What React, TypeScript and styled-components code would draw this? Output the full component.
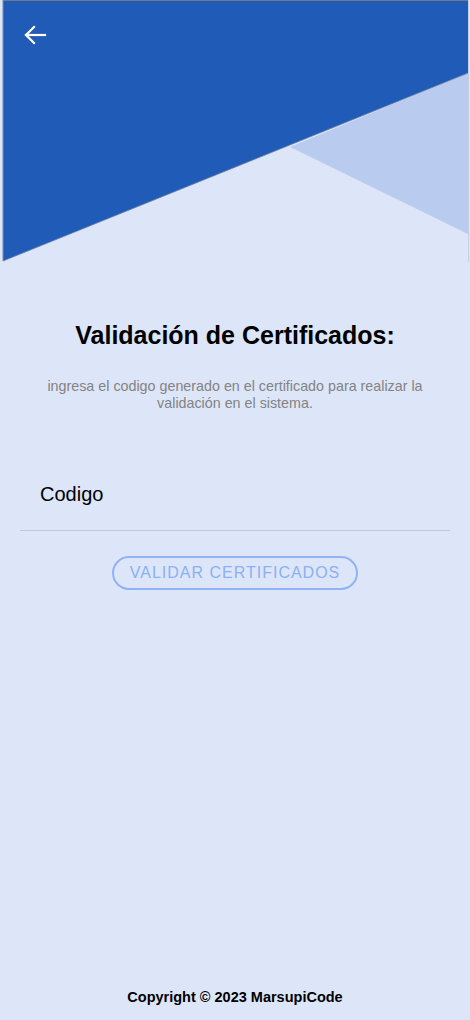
import React from "react";
import styled, { createGlobalStyle } from "styled-components";

const Global = createGlobalStyle`
  html, body { margin: 0; padding: 0; background: #dde6f8; }
  * { box-sizing: border-box; }
`;

const Page = styled.div`
  width: 470px;
  min-height: 1020px;
  display: flex;
  flex-direction: column;
  align-items: stretch;
  font-family: "Liberation Sans", Arial, sans-serif;
  background: #dde6f8;
`;

const Header = styled.header`
  position: relative;
  height: 262px;
`;

const BackButton = styled.button`
  position: absolute;
  left: 20px;
  top: 20px;
  width: 30px;
  height: 30px;
  padding: 0;
  border: 0;
  background: transparent;
  display: flex;
  align-items: center;
  justify-content: center;
  cursor: pointer;
`;

const Content = styled.main`
  flex: 1;
  display: flex;
  flex-direction: column;
  align-items: center;
  padding: 58px 20px 0;
`;

const Title = styled.h1`
  margin: 0;
  font-size: 25px;
  line-height: 30px;
  font-weight: 700;
  color: #000;
  text-align: center;
`;

const Subtitle = styled.p`
  margin: 28px 0 0;
  font-size: 14.3px;
  line-height: 17px;
  color: #838383;
  text-align: center;
  padding: 0 10px;
`;

const Field = styled.div`
  margin-top: 70px;
  width: 100%;
  border-bottom: 1px solid #c3c9d8;
  padding: 0 20px 24px;
`;

const Input = styled.input`
  width: 100%;
  border: 0;
  background: transparent;
  outline: none;
  font-family: "Liberation Sans", Arial, sans-serif;
  font-size: 20px;
  line-height: 24px;
  color: #000;
  padding: 0;
  &::placeholder { color: #000; opacity: 1; }
`;

const ValidateButton = styled.button`
  margin-top: 25px;
  height: 34px;
  padding: 0 16px;
  border: 2px solid #8fb3f6;
  border-radius: 17px;
  background: transparent;
  color: #8ab0f5;
  font-family: "Liberation Sans", Arial, sans-serif;
  font-size: 16px;
  letter-spacing: 1px;
  display: flex;
  align-items: center;
  justify-content: center;
`;

const Footer = styled.footer`
  padding: 0 0 14px;
  text-align: center;
  font-size: 14.5px;
  font-weight: 700;
  line-height: 17px;
  color: #000;
`;

export default function App() {
  return (
    <Page>
      <Global />
      <Header>
        <svg width="470" height="262" viewBox="0 0 470 262">
          <rect x="2" y="0" width="467" height="262" fill="#dde6f8" />
          <polygon points="290,147 468,73 468,234" fill="#b9cbee" />
          <polygon points="3,1 468,1 468,73 3,261" fill="#215bb8" />
          <line x1="3" y1="261" x2="468" y2="73" stroke="#6f7f9f" strokeWidth="0.8" />
          <line x1="3" y1="0.5" x2="468" y2="0.5" stroke="#6d7a92" strokeWidth="1" />
          <line x1="3" y1="0" x2="3" y2="261" stroke="#7b8aa6" strokeWidth="1" />
          <line x1="468.5" y1="0" x2="468.5" y2="262" stroke="#c4cfe6" strokeWidth="1" />
        </svg>
        <BackButton aria-label="Volver">
          <svg width="24" height="22" viewBox="0 0 24 22" fill="none" stroke="#ffffff" strokeWidth="2.2" strokeLinecap="square">
            <path d="M3 11H22" />
            <path d="M11 3L3 11L11 19" />
          </svg>
        </BackButton>
      </Header>
      <Content>
        <Title>Validación de Certificados:</Title>
        <Subtitle>
          ingresa el codigo generado en el certificado para realizar la validación en el sistema.
        </Subtitle>
        <Field>
          <Input placeholder="Codigo" />
        </Field>
        <ValidateButton>VALIDAR CERTIFICADOS</ValidateButton>
      </Content>
      <Footer>Copyright © 2023 MarsupiCode</Footer>
    </Page>
  );
}
